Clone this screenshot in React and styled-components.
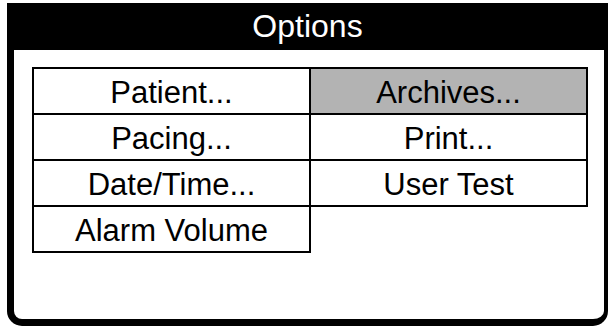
import styled, { createGlobalStyle } from "styled-components";

const GlobalStyle = createGlobalStyle`
  body {
    margin: 0;
    background: #ffffff;
    font-family: "Liberation Sans", Arial, sans-serif;
  }
`;

const Frame = styled.div`
  box-sizing: border-box;
  margin: 3px 0 0 7px;
  width: 601px;
  height: 323px;
  border-left: 7px solid #000;
  border-right: 4px solid #000;
  border-bottom: 7px solid #000;
  border-radius: 0 0 15px 15px;
  display: flex;
  flex-direction: column;
`;

const TitleBar = styled.div`
  height: 47px;
  background: #000;
  color: #fff;
  font-size: 32px;
  display: flex;
  align-items: center;
  justify-content: center;
  margin: 0 -4px 0 -7px;
`;

const Body = styled.div`
  padding: 17px 0 0 18px;
`;

const Grid = styled.table`
  border-collapse: collapse;
  width: 556px;
`;

const Cell = styled.td`
  width: 50%;
  height: 42px;
  padding: 2px 0 0;
  border: ${(p) => (p.$empty ? "none" : "2px solid #000")};
  background: ${(p) => (p.$selected ? "#b3b3b3" : "transparent")};
  text-align: center;
  vertical-align: middle;
  font-size: 31px;
  color: #000;
  line-height: 1;
`;

const rows = [
  ["Patient...", "Archives..."],
  ["Pacing...", "Print..."],
  ["Date/Time...", "User Test"],
  ["Alarm Volume", null],
];

export default function App() {
  return (
    <>
      <GlobalStyle />
      <Frame>
        <TitleBar>Options</TitleBar>
        <Body>
          <Grid>
            <tbody>
              {rows.map((row, i) => (
                <tr key={i}>
                  {row.map((label, j) => (
                    <Cell
                      key={j}
                      $empty={label === null}
                      $selected={label === "Archives..."}
                    >
                      {label}
                    </Cell>
                  ))}
                </tr>
              ))}
            </tbody>
          </Grid>
        </Body>
      </Frame>
    </>
  );
}
